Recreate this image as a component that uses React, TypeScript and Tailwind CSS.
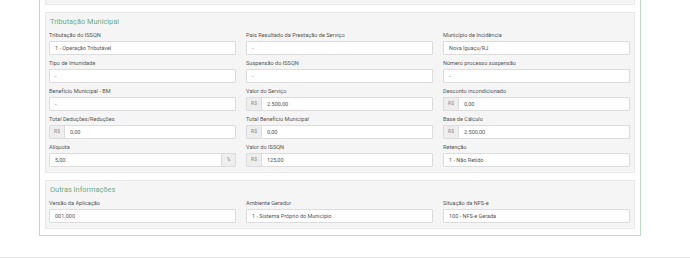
import React from "react";

type Field = { label: string; value: string; prefix?: string; suffix?: string };

const trib: Field[] = [
  { label: "Tributação do ISSQN", value: "1 - Operação Tributável" },
  { label: "País Resultado da Prestação de Serviço", value: "-" },
  { label: "Município de Incidência", value: "Nova Iguaçu/RJ" },
  { label: "Tipo de Imunidade", value: "-" },
  { label: "Suspensão do ISSQN", value: "-" },
  { label: "Número processo suspensão", value: "-" },
  { label: "Benefício Municipal - BM", value: "-" },
  { label: "Valor do Serviço", value: "2.500,00", prefix: "R$" },
  { label: "Desconto incondicionado", value: "0,00", prefix: "R$" },
  { label: "Total Deduções/Reduções", value: "0,00", prefix: "R$" },
  { label: "Total Benefício Municipal", value: "0,00", prefix: "R$" },
  { label: "Base de Cálculo", value: "2.500,00", prefix: "R$" },
  { label: "Alíquota", value: "5,00", suffix: "%" },
  { label: "Valor do ISSQN", value: "125,00", prefix: "R$" },
  { label: "Retenção", value: "1 - Não Retido" },
];

const outras: Field[] = [
  { label: "Versão da Aplicação", value: "001.000" },
  { label: "Ambiente Gerador", value: "1 - Sistema Próprio do Município" },
  { label: "Situação da NFS-e", value: "100 - NFS-e Gerada" },
];

function FieldBox({ f }: { f: Field }) {
  return (
    <div className="flex flex-col">
      <div className="h-[9px] leading-[9px] text-[5.6px] text-[#555] whitespace-nowrap">{f.label}</div>
      <div className="mt-[1px] flex h-[14px] bg-white border border-[#dcdcdc] rounded-[1px]">
        {f.prefix && (
          <div className="w-[15px] shrink-0 flex items-center justify-center bg-[#eeeeee] border-r border-[#dcdcdc] text-[5px] text-[#888]">
            {f.prefix}
          </div>
        )}
        <div className="flex-1 flex items-center pl-[5px] text-[5.5px] text-[#555] whitespace-nowrap">{f.value}</div>
        {f.suffix && (
          <div className="w-[14px] shrink-0 flex items-center justify-center bg-[#eeeeee] border-l border-[#dcdcdc] text-[5px] text-[#888]">
            {f.suffix}
          </div>
        )}
      </div>
    </div>
  );
}

function Panel({ title, fields, pb }: { title: string; fields: Field[]; pb: string }) {
  return (
    <div className={`bg-[#f5f5f5] border border-[#e9e9e9] pl-[3px] pr-[4px] ${pb}`}>
      <div className="h-[18px] pt-[3px] pl-[1px] text-[7.4px] leading-[12px] text-[#72ab7c]">{title}</div>
      <div className="grid grid-cols-3 gap-x-[10px] gap-y-[4px]">
        {fields.map((f, i) => (
          <FieldBox key={i} f={f} />
        ))}
      </div>
    </div>
  );
}

export default function App() {
  return (
    <div className="w-[690px] h-[258px] bg-white overflow-hidden" style={{ fontFamily: "Roboto, 'Liberation Sans', sans-serif" }}>
      <div className="ml-[39px] w-[602px] border border-t-0 border-[#b9dcc3] px-[5px] pb-[6px]">
        <div className="h-[5px] bg-[#f5f5f5] border border-t-0 border-[#e9e9e9]" />
        <div className="h-[7px]" />
        <Panel title="Tributação Municipal" fields={trib} pb="pb-[5px]" />
        <div className="h-[7px]" />
        <Panel title="Outras Informações" fields={outras} pb="pb-[5px]" />
      </div>
      <div className="mt-[21px] border-t border-[#e6e6e6]" />
    </div>
  );
}
